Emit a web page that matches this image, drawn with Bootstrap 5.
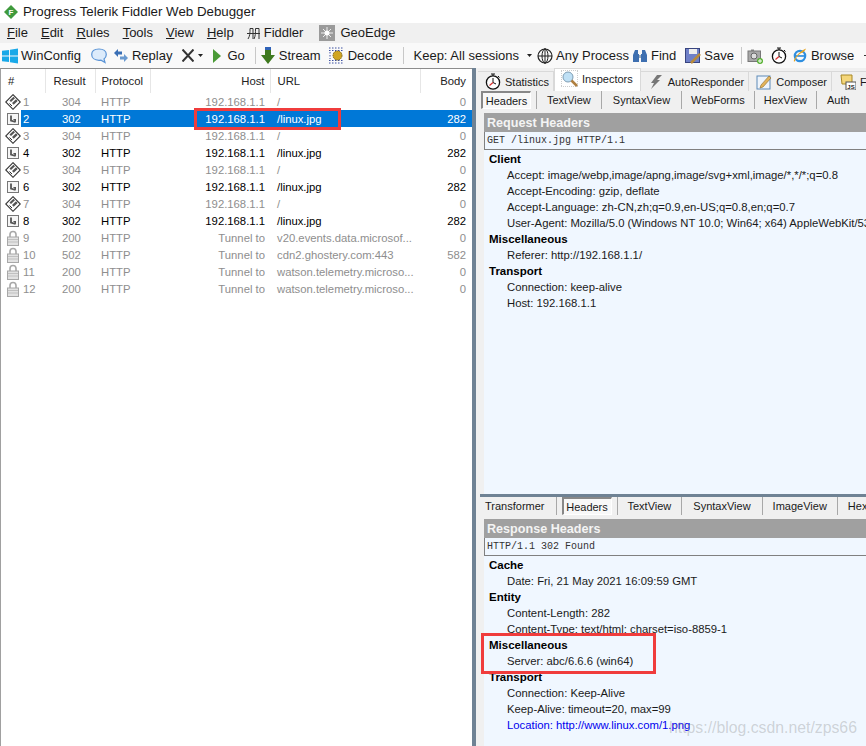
<!DOCTYPE html>
<html lang="en">
<head>
    <meta charset="UTF-8">
    <meta content="width=device-width, initial-scale=1.0" name="viewport">
    <title>Progress Telerik Fiddler Web Debugger</title>
    <link href="https://cdn.jsdelivr.net/npm/bootstrap@5.3.0/dist/css/bootstrap.min.css" rel="stylesheet">
    <style>
        html, body { height: 100%; overflow: hidden; }
        body { font-family: "Liberation Sans", sans-serif; font-size: 12px; line-height: 16px; color: #1a1a1a; background: #fff; }
        svg { flex-shrink: 0; }
        .app { width: 866px; height: 746px; position: relative; overflow: hidden; }
        .title-bar { height: 23px; padding-left: 3px; font-size: 13.3px; gap: 4px; }
        .menu-bar { height: 20px; background: #f0f0f0; padding-left: 7px; font-size: 13px; gap: 13px; }
        .tool-bar { height: 25px; background: #f9f9f9; padding-left: 2px; font-size: 13px; white-space: nowrap; }
        .tool-bar > * { flex: none; }
        .tool-item { gap: 3px; }
        .tool-sep { width: 1px; height: 17px; background: #c8c8c8; }
        .g3 { margin-left: 3px; } .g5 { margin-left: 5px; } .g6 { margin-left: 6px; } .g7 { margin-left: 7px; } .g8 { margin-left: 8px; }
        .g9 { margin-left: 9px; } .g10 { margin-left: 10px; } .g12 { margin-left: 12px; }
        .panes { height: 678px; }
        .left-pane { width: 472px; border-left: 1px solid #a0a0a0; border-top: 1px solid #8c8c8c; flex: none; }
        .splitter-v { width: 4px; background: #6f8294; flex: none; }
        .right-pane { flex: 1; min-width: 0; background: #f0f0f0; padding-left: 4px; }
        .sessions { width: 471px; table-layout: fixed; border-collapse: collapse; font-size: 11.3px; }
        .sessions th { height: 24px; font-weight: 400; color: #222; padding: 0 6px; border-right: 1px solid #e6e6e6; }
        .sessions th.last-col { border-right: 0; }
        .sessions td { height: 17px; padding: 0 6px; white-space: nowrap; color: #000; }
        .sessions td:first-child { padding: 0 0 0 4px; }
        .sessions th:first-child { padding-left: 7px; }
        .sessions td.res { padding-left: 17px; }
        .sessions td.url, .sessions th.url { padding-left: 7px; }
        .sessions .host-col { padding-right: 5px; }
        .row-dim td, .row-tunnel td { color: #8e8e8e; }
        .row-sel td { background: #0078d7; color: #fff; }
        .row-sel td:first-child { background: linear-gradient(90deg, #fff 20px, #0078d7 20px); }
        .num-cell { gap: 2px; }
        .main-tabs { height: 23px; font-size: 11px; margin-left: -2px; }
        .main-tab { height: 20px; padding: 0 4px 0 7px; gap: 4px; background: #f0f0f0; border-right: 1px solid #d9d9d9; border-top: 1px solid #d9d9d9; margin-top: 3px; white-space: nowrap; }
        .main-tab.is-on { height: 23px; margin-top: 0; background: #fff; border: 1px solid #d9d9d9; border-bottom: 0; padding: 0 7px 3px 6px; }
        .sub-tabs { height: 22px; font-size: 11px; white-space: nowrap; }
        .sub-tab { height: 18px; padding: 0 10px; display: flex; align-items: center; border-right: 1px solid #a8a8a8; }
        .sub-tab.has-box { padding: 0 5px 0 1px; }
        .sub-tab.lo-box { padding: 0 5px 0 5px; }
        .sub-on { width: 50px; height: 18px; display: flex; align-items: center; justify-content: center; background: #f8f8f8; border: 1px solid #fff; border-top: 2px solid #888; border-left: 2px solid #888; }
        .sub-first { padding: 0 11px 0 5px; }
        .sub-wide { padding: 0 11px; }
        .sub-tight { padding: 0 9px; }
        .insp { background: #f0f7ff; }
        .insp-head { height: 19px; background: #a0a0a0; color: #f4f4f4; font-weight: 700; font-size: 12.6px; padding-left: 3px; }
        .raw-line { height: 18px; background: #f0f7ff; border-left: 1px solid #808080; border-bottom: 1px solid #808080; padding-left: 2px; font-family: "Liberation Mono", monospace; font-size: 10px; color: #333; }
        .tree { padding: 1px 0 0 5px; height: 344px; font-size: 11.3px; color: #1a1a1a; white-space: nowrap; overflow: hidden; }
        .tree-lo { height: 190px; }
        .tree-group { font-weight: 700; font-size: 11.5px; color: #000; }
        .tree-item { padding-left: 18px; }
        .tree-link { color: #0000ee; }
        .splitter-h { height: 3px; background: #6f8294; }
        .mark-box { position: absolute; border: 3px solid #f03c3c; }
        .mark-host { left: 194px; top: 108px; width: 147px; height: 22px; }
        .mark-misc { left: 481px; top: 633px; width: 175px; height: 41px; }
        .watermark { position: absolute; left: 669px; top: 720px; font-size: 15.8px; color: rgba(120, 120, 120, .3); white-space: nowrap; }
    </style>
</head>
<body>
<svg width="0" height="0" class="position-absolute">
    <defs>
        <symbol id="ico-http" viewBox="0 0 16 16"><path d="M8 .7 15.300 8 8 15.300 .7 8Z" fill="#fff" stroke="#333" stroke-width="1.100"/><path d="M4.500 6.500 8.500 2.700 10 4.200 6 8ZM7 9 11 5.300 12.700 7 8.700 10.700Z" fill="#555"/><path d="M4.500 9.500 7 12" stroke="#333"/></symbol>
        <symbol id="ico-redir" viewBox="0 0 16 16"><rect x="2.500" y="2.500" width="11" height="11" fill="#f6f6f6" stroke="#777"/><path d="M6 4.500V9.500L10.500 11" fill="none" stroke="#555" stroke-width="1.800"/><path d="M8 8H11V11.500Z" fill="#555"/></symbol>
        <symbol id="ico-lock" viewBox="0 0 16 16"><path d="M5 7V4.500a3 3 0 0 1 6 0V7" fill="none" stroke="#a8a8a8" stroke-width="1.600"/><rect x="2.500" y="7" width="11" height="8.500" fill="#e2e2e2" stroke="#a8a8a8"/><path d="M3 9.500h10M3 12h10" stroke="#c0c0c0"/></symbol>
        <symbol id="ico-timer" viewBox="0 0 16 17"><circle cx="8" cy="9.500" r="6.600" fill="#fff" stroke="#111" stroke-width="1.300"/><path d="M6 1H10M8 1V3M13 3 14.500 4.500" stroke="#111" fill="none"/><path d="M8 5V9.500L11 11" stroke="#111" fill="none"/><path d="M8 9.500 4.500 12.500" stroke="#d33" stroke-width="1.200"/></symbol>
    </defs>
</svg>
<div class="app">
    <div class="title-bar d-flex align-items-center">
        <svg width="16" height="16" viewBox="0 0 16 16"><path d="M8 1 15 8 8 15 1 8Z" fill="#3f9a3c"/><text x="8" y="11" font-size="8" font-weight="700" fill="#fff" text-anchor="middle" font-family="Liberation Sans">F</text></svg>
        <span>Progress Telerik Fiddler Web Debugger</span>
    </div>
    <div class="menu-bar d-flex align-items-center">
        <span><u>F</u>ile</span><span><u>E</u>dit</span><span><u>R</u>ules</span><span><u>T</u>ools</span><span><u>V</u>iew</span><span><u>H</u>elp</span>
        <span class="d-flex align-items-center" style="gap:4px"><svg width="13" height="13" viewBox="0 0 13 13"><path d="M3 1.500C3 6 3 9 1 12M3 1.500H6V12M8.500 1.500C8.500 6 8.500 9 7 12M8.500 1.500H12V12M0 6.500H13" stroke="#333" fill="none"/></svg>Fiddler</span>
        <span class="g3 d-flex align-items-center" style="gap:5px"><svg width="16" height="16" viewBox="0 0 16 16"><rect width="16" height="16" fill="#9a9a9a"/><path d="M8 2V14M2 8H14M4 4 12 12M12 4 4 12" stroke="#eee"/><circle cx="8" cy="8" r="2.500" fill="#fff"/></svg>GeoEdge</span>
    </div>
    <div class="tool-bar d-flex align-items-center">
        <span class="tool-item d-flex align-items-center"><svg width="16" height="16" viewBox="0 0 17 16"><path d="M0 2.500 7.500 1.500V7.500H0ZM8.500 1.300 17 0V7.500H8.500ZM0 8.500H7.500V14.500L0 13.500ZM8.500 8.500H17V16L8.500 14.700Z" fill="#18a8e8"/></svg>WinConfig</span>
        <svg class="g10" width="16" height="16" viewBox="0 0 16 16"><path d="M8 1C12.500 1 15.300 3.300 15.300 6.500 15.300 8.500 14.300 10 13 11L14 14.500 10 12.200C9.300 12.300 8.700 12.300 8 12.300 3.500 12.300 .7 9.800 .7 6.500S3.500 1 8 1Z" fill="#dcebfb" stroke="#5b94d6" stroke-width="1.200"/></svg>
        <span class="tool-item g7 d-flex align-items-center" style="gap:4px"><svg width="14" height="15" viewBox="0 0 14 15"><path d="M0 5 4 1V3.500H8V6.500H4V9Z" fill="#3a6fb5"/><path d="M14 10 10 14V11.500H6V8.500H10V6Z" fill="#6a9ad0"/></svg>Replay</span>
        <span class="g10 d-flex align-items-center" style="gap:4px"><svg width="12" height="13" viewBox="0 0 12 13"><path d="M.5 .5 11.500 12.500M11.500 .5 .5 12.500" stroke="#333" stroke-width="2"/></svg><svg width="5" height="3" viewBox="0 0 5 3"><path d="M0 0H5L2.500 3Z" fill="#222"/></svg></span>
        <span class="tool-item g10 d-flex align-items-center" style="gap:6px"><svg width="8" height="14" viewBox="0 0 8 14"><path d="M0 0 8 7 0 14Z" fill="#4a9a36"/></svg>Go</span>
        <span class="tool-sep g10"></span>
        <span class="tool-item g5 d-flex align-items-center" style="gap:4px"><svg width="14" height="17" viewBox="0 0 14 17"><path d="M4 0H10V3H4Z" fill="#2f62b8"/><path d="M4 3H10V8H14L7 17 0 8H4Z" fill="#3f7a1f"/></svg>Stream</span>
        <span class="tool-item g8 d-flex align-items-center" style="gap:4px"><svg width="15" height="17" viewBox="0 0 15 17"><path d="M0 1H15M0 3.500H15M0 13.500H15M0 16H15M1 5V12" stroke="#3a4fa0" stroke-dasharray="1.500 1.500"/><circle cx="8.500" cy="8.500" r="4.500" fill="#d0a520" stroke="#7d6412" stroke-dasharray="1.500 .7"/></svg>Decode</span>
        <span class="tool-sep g10"></span>
        <span class="g10">Keep: All sessions</span>
        <svg class="g8" width="5" height="3" viewBox="0 0 5 3"><path d="M0 0H5L2.500 3Z" fill="#222"/></svg>
        <span class="tool-item g5 d-flex align-items-center"><svg width="16" height="16" viewBox="0 0 16 16"><circle cx="8" cy="8" r="7" fill="none" stroke="#222" stroke-width="1.200"/><ellipse cx="8" cy="8" rx="3" ry="7" fill="none" stroke="#222"/><path d="M1 8H15" stroke="#222"/><path d="M8 0V16" stroke="#222"/></svg>Any Process</span>
        <span class="tool-item g3 d-flex align-items-center"><svg width="16" height="16" viewBox="0 0 16 16"><path d="M3 2H6V6H7V14H1V7ZM10 2H13L15 7V14H9V6H10Z" fill="#3e6fb0"/><path d="M7 7H9V10H7Z" fill="#9ab"/></svg>Find</span>
        <span class="tool-item g9 d-flex align-items-center"><svg width="16" height="16" viewBox="0 0 16 16"><rect x=".5" y=".5" width="14" height="14" fill="#6f80c8" stroke="#39457f"/><rect x="4" y="1" width="8" height="5" fill="#eee"/><path d="M6 15 15 6" stroke="#b88a3a" stroke-width="2.500"/></svg>Save</span>
        <span class="tool-sep g7"></span>
        <svg class="g5" width="16" height="16" viewBox="0 0 16 16"><path d="M4 3V1.500H7V3Z" fill="#888"/><rect x="1" y="3" width="12.500" height="10.500" fill="#a8a8a8" stroke="#777"/><circle cx="7" cy="8" r="3" fill="#ddd" stroke="#666"/><circle cx="13" cy="13" r="3" fill="#55b030"/><path d="M11 13H15M13 11V15" stroke="#fff"/></svg>
        <svg class="g8" width="16" height="17"><use href="#ico-timer"/></svg>
        <span class="tool-item g5 d-flex align-items-center"><svg width="16" height="17" viewBox="0 0 17 17"><circle cx="8.500" cy="9" r="5.500" fill="none" stroke="#2f8fe0" stroke-width="2.400"/><path d="M4 9H13" stroke="#2f8fe0" stroke-width="1.800"/><path d="M2 15C1 12 9 3 15 1 14 3 13 4 12 5 8 6 4 10 3 15Z" fill="#e8a520"/></svg>Browse</span>
        <svg class="g10" width="4" height="1" viewBox="0 0 4 1"><path d="M0 .5H4" stroke="#333"/></svg>
    </div>
    <div class="panes d-flex">
        <div class="left-pane">
            <table class="sessions">
                <colgroup><col style="width:44px"><col style="width:50px"><col style="width:55px"><col style="width:120px"><col style="width:150px"><col style="width:52px"></colgroup>
                <thead><tr><th>#</th><th class="ps-2">Result</th><th>Protocol</th><th class="text-end host-col">Host</th><th class="url">URL</th><th class="text-end last-col">Body</th></tr></thead>
                <tbody id="session-rows"></tbody>
            </table>
        </div>
        <div class="splitter-v"></div>
        <div class="right-pane">
            <div class="main-tabs d-flex">
                <div class="main-tab d-flex align-items-center"><svg width="16" height="17"><use href="#ico-timer"/></svg>Statistics</div>
                <div class="main-tab is-on d-flex align-items-center"><svg width="17" height="17" viewBox="0 0 17 17"><path d="M0 0H17V17H0Z" fill="none" stroke="#999" stroke-dasharray="1 1"/><circle cx="7" cy="7" r="5" fill="#bfe0f5" stroke="#7d9cb3"/><path d="M10.500 10.500 16 16" stroke="#b08040" stroke-width="2.500"/></svg>Inspectors</div>
                <div class="main-tab d-flex align-items-center"><svg width="16" height="16" viewBox="0 0 16 16"><path d="M9 1H14L9 6H12L3 15 6 9H3Z" fill="#777"/></svg>AutoResponder</div>
                <div class="main-tab d-flex align-items-center"><svg width="16" height="16" viewBox="0 0 16 16"><rect x="1" y="2" width="13" height="13" fill="#eef4fb" stroke="#5d8ab8"/><path d="M5 11 13 2 15 4 7 13 4 14Z" fill="#e3b35a" stroke="#8a6a2a" stroke-width=".6"/></svg>Composer</div>
                <div class="main-tab d-flex align-items-center"><svg width="17" height="16" viewBox="0 0 17 16"><path d="M2 1H13V10H3Z" fill="#f4d67a" stroke="#a88826"/><rect x="7" y="8" width="10" height="8" fill="#fff" stroke="#555"/><text x="12" y="14.500" font-size="6" font-weight="700" fill="#222" text-anchor="middle" font-family="Liberation Sans">JS</text></svg>Fi</div>
            </div>
            <div class="sub-tabs d-flex align-items-start">
                <span class="sub-tab has-box"><span class="sub-on">Headers</span></span><span class="sub-tab">TextView</span><span class="sub-tab sub-wide">SyntaxView</span><span class="sub-tab sub-tight">WebForms</span><span class="sub-tab sub-tight">HexView</span><span class="sub-tab border-0">Auth</span>
            </div>
            <div class="insp ms-1">
                <div class="insp-head d-flex align-items-center">Request Headers</div>
                <div class="raw-line d-flex align-items-center">GET /linux.jpg HTTP/1.1</div>
                <div class="tree">
                    <div class="tree-group">Client</div>
                    <div class="tree-item">Accept: image/webp,image/apng,image/svg+xml,image/*,*/*;q=0.8</div>
                    <div class="tree-item">Accept-Encoding: gzip, deflate</div>
                    <div class="tree-item">Accept-Language: zh-CN,zh;q=0.9,en-US;q=0.8,en;q=0.7</div>
                    <div class="tree-item">User-Agent: Mozilla/5.0 (Windows NT 10.0; Win64; x64) AppleWebKit/537.36</div>
                    <div class="tree-group">Miscellaneous</div>
                    <div class="tree-item">Referer: http://192.168.1.1/</div>
                    <div class="tree-group">Transport</div>
                    <div class="tree-item">Connection: keep-alive</div>
                    <div class="tree-item">Host: 192.168.1.1</div>
                </div>
            </div>
            <div class="splitter-h"></div>
            <div class="sub-tabs d-flex align-items-start">
                <span class="sub-tab sub-first">Transformer</span><span class="sub-tab lo-box"><span class="sub-on">Headers</span></span><span class="sub-tab">TextView</span><span class="sub-tab sub-wide">SyntaxView</span><span class="sub-tab">ImageView</span><span class="sub-tab border-0">HexView</span>
            </div>
            <div class="insp ms-1">
                <div class="insp-head d-flex align-items-center">Response Headers</div>
                <div class="raw-line d-flex align-items-center">HTTP/1.1 302 Found</div>
                <div class="tree tree-lo">
                    <div class="tree-group">Cache</div>
                    <div class="tree-item">Date: Fri, 21 May 2021 16:09:59 GMT</div>
                    <div class="tree-group">Entity</div>
                    <div class="tree-item">Content-Length: 282</div>
                    <div class="tree-item">Content-Type: text/html; charset=iso-8859-1</div>
                    <div class="tree-group">Miscellaneous</div>
                    <div class="tree-item">Server: abc/6.6.6 (win64)</div>
                    <div class="tree-group">Transport</div>
                    <div class="tree-item">Connection: Keep-Alive</div>
                    <div class="tree-item">Keep-Alive: timeout=20, max=99</div>
                    <div class="tree-item tree-link">Location: http://www.linux.com/1.png</div>
                </div>
            </div>
        </div>
    </div>
    <div class="mark-box mark-host"></div>
    <div class="mark-box mark-misc"></div>
    <div class="watermark">https://blog.csdn.net/zps66</div>
</div>
<script>
    const rows = [
        [1, 304, '192.168.1.1', '/', 0, 'http'], [2, 302, '192.168.1.1', '/linux.jpg', 282, 'sel'],
        [3, 304, '192.168.1.1', '/', 0, 'http'], [4, 302, '192.168.1.1', '/linux.jpg', 282, 'redir'],
        [5, 304, '192.168.1.1', '/', 0, 'http'], [6, 302, '192.168.1.1', '/linux.jpg', 282, 'redir'],
        [7, 304, '192.168.1.1', '/', 0, 'http'], [8, 302, '192.168.1.1', '/linux.jpg', 282, 'redir'],
        [9, 200, 'Tunnel to', 'v20.events.data.microsof...', 0, 'lock'], [10, 502, 'Tunnel to', 'cdn2.ghostery.com:443', 582, 'lock'],
        [11, 200, 'Tunnel to', 'watson.telemetry.microso...', 0, 'lock'], [12, 200, 'Tunnel to', 'watson.telemetry.microso...', 0, 'lock']
    ];
    const icons = { http: 'ico-http', sel: 'ico-redir', redir: 'ico-redir', lock: 'ico-lock' };
    const classes = { http: 'row-dim', sel: 'row-sel', redir: '', lock: 'row-tunnel' };
    document.getElementById('session-rows').innerHTML = rows.map(([n, res, host, url, body, kind]) => `
        <tr class="${classes[kind]}">
            <td><div class="num-cell d-flex align-items-center"><svg width="16" height="16"><use href="#${icons[kind]}"/></svg><span>${n}</span></div></td>
            <td class="res">${res}</td><td>HTTP</td><td class="text-end host-col">${host}</td><td class="url">${url}</td><td class="text-end">${body}</td>
        </tr>`).join('');
</script>
<script src="https://cdn.jsdelivr.net/npm/bootstrap@5.3.0/dist/js/bootstrap.bundle.min.js"></script>
</body>
</html>
